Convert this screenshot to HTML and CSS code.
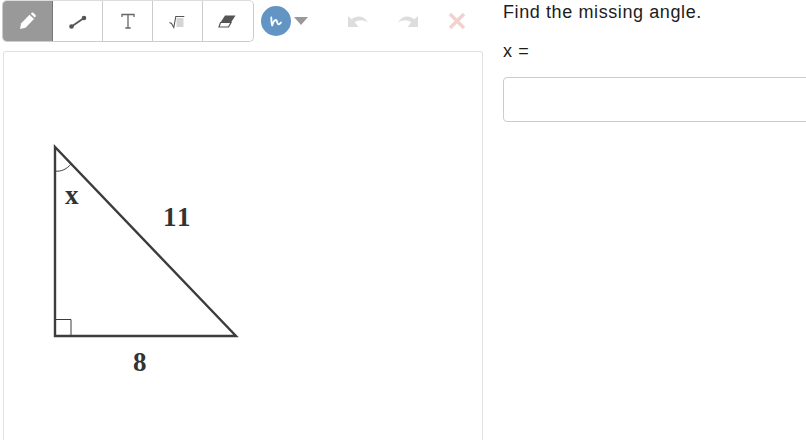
FILE: index.html
```html
<!DOCTYPE html>
<html lang="en">
<head>
<meta charset="utf-8">
<title>Find the missing angle</title>
<link rel="stylesheet" href="styles.css">
</head>
<body>
<div class="page">
  <div class="work">
    <div class="toolbar">
      <div class="tools">
        <div class="tool active">
          <svg width="20" height="20" viewBox="0 0 20 20"><path d="M2 18l1-5.500 8.500-8.700 4.500 4.200-8.500 8.800z" fill="#fff"/><path d="M12.800 2.800l1-1c.5-.4 1-.4 1.500 0l2.300 2.200c.4.500.4 1 0 1.400l-1 1z" fill="#fff"/></svg>
        </div>
        <div class="tool">
          <svg width="20" height="20" viewBox="0 0 20 20"><path d="M3.500 15.500L16 7" stroke="#555" stroke-width="1.800"/><circle cx="3.500" cy="15.500" r="2.300" fill="#555"/><circle cx="16" cy="7" r="2.300" fill="#555"/></svg>
        </div>
        <div class="tool">
          <svg width="20" height="20" viewBox="0 0 20 20"><path d="M4 6V3.500h12V6M10 3.500V17M7.300 17h5.400" fill="none" stroke="#666" stroke-width="1.300"/></svg>
        </div>
        <div class="tool">
          <svg width="20" height="20" viewBox="0 0 20 20"><path d="M1.500 11.500l2 1 2.300 4 2-11h8.500" fill="none" stroke="#555" stroke-width="1.100"/><rect x="8.500" y="7" width="7" height="9" fill="#d5d5d5"/></svg>
        </div>
        <div class="tool">
          <svg width="20" height="20" viewBox="0 0 20 20"><path d="M7 4.500H17.500L13 11.500H2.500z" fill="#555"/><path d="M2.500 11.500H13L10.500 16H1z" fill="#fff" stroke="#555" stroke-width="1.200"/></svg>
        </div>
      </div>
      <div class="picker">
        <div class="swatch">
          <svg width="16" height="16" viewBox="0 0 16 16"><path d="M3.300 4.500C3.200 7 3.500 10 4.200 12.500 4.800 10 6.300 7 8 7c1.500 0 .6 4 2.300 4.300 1.200 0 2-.8 2.700-1.800" fill="none" stroke="#fff" stroke-width="1.800" stroke-linecap="round" stroke-linejoin="round"/></svg>
        </div>
        <div class="caret"></div>
      </div>
      <div class="actions">
        <svg width="22" height="16" viewBox="0 0 22 16"><path d="M1 14V3l3.700 3.300C9.500 2.500 16.500 2 21 9.500 16 6.500 11.500 6.500 7.800 9.200L11.500 14z" fill="#ddd"/></svg>
        <svg width="22" height="16" viewBox="0 0 22 16"><path d="M21 14V3l-3.700 3.300C12.500 2.500 5.500 2 1 9.500 6 6.500 10.500 6.500 14.200 9.200L10.500 14z" fill="#ddd"/></svg>
        <svg width="20" height="20" viewBox="0 0 20 20"><path d="M3 3l14 14M17 3L3 17" stroke="#f1d2cf" stroke-width="3.400"/></svg>
      </div>
    </div>
    <div class="canvas">
      <svg class="figure" width="478" height="388" viewBox="4 52 478 388">
        <g fill="none" stroke="#3c3c3c">
          <path d="M55 147V336H236Z" stroke-width="2.400" stroke-linejoin="miter"/>
          <path d="M55 319.500H71V336" stroke-width="1"/>
          <path d="M55 171C61 172 67 169 71 164" stroke-width="1"/>
        </g>
        <g class="labels">
          <text x="65" y="204">x</text>
          <text x="163" y="226" class="wide">11</text>
          <text x="133" y="371">8</text>
        </g>
      </svg>
    </div>
  </div>
  <div class="question">
    <p class="prompt">Find the missing angle.</p>
    <p class="eq">x =</p>
    <div class="answer"></div>
  </div>
</div>
</body>
</html>
```
FILE: styles.css
```css
html, body {
  margin: 0;
  padding: 0;
  background: #fff;
  height: 100%;
  overflow: hidden;
}
.page {
  display: flex;
  width: 806px;
  height: 440px;
  overflow: hidden;
  font-family: "Liberation Sans", Arial, sans-serif;
  color: #1c1c1c;
}
.work {
  flex: 0 0 483px;
  padding-left: 2px;
  box-sizing: border-box;
  display: flex;
  flex-direction: column;
}
.toolbar {
  display: flex;
  align-items: center;
  height: 42px;
  margin-bottom: 9px;
}
.tools {
  display: flex;
  width: 252px;
  height: 42px;
  box-sizing: border-box;
  border: 1px solid #ccc;
  border-top-color: #ddd;
  border-radius: 5px;
  overflow: hidden;
}
.tool {
  flex: 0 0 50px;
  box-sizing: border-box;
  display: flex;
  align-items: center;
  justify-content: center;
  border-right: 1px solid #ccc;
}
.tool:last-child {
  border-right: 0;
}
.tool.active {
  background: #999;
  border-right-color: #777;
}
.picker {
  display: flex;
  align-items: center;
  margin-left: 7px;
  gap: 3px;
}
.swatch {
  width: 30px;
  height: 30px;
  border-radius: 50%;
  background: #6295c4;
  display: flex;
  align-items: center;
  justify-content: center;
}
.caret {
  width: 0;
  height: 0;
  border-left: 7px solid transparent;
  border-right: 7px solid transparent;
  border-top: 8px solid #999;
  margin-top: -1px;
}
.actions {
  display: flex;
  align-items: center;
  gap: 28px;
  margin-left: 39px;
}
.canvas {
  flex: 1;
  margin-left: 1px;
  border: 1px solid #e2e2e2;
  border-bottom: 0;
  border-radius: 3px 3px 0 0;
  overflow: hidden;
}
.figure {
  display: block;
}
.labels text {
  font-family: "Liberation Serif", "Times New Roman", serif;
  font-weight: bold;
  font-size: 27px;
  fill: #333;
}
.labels .wide {
  letter-spacing: 2px;
}
.question {
  flex: 1;
  padding-left: 20px;
  min-width: 0;
}
.prompt {
  margin: 0;
  font-size: 18px;
  letter-spacing: 0.6px;
  line-height: 25px;
  height: 25px;
}
.eq {
  margin: 14px 0 0;
  font-size: 18px;
  letter-spacing: 0.6px;
  line-height: 24px;
  height: 24px;
}
.answer {
  margin-top: 14px;
  width: 340px;
  height: 45px;
  box-sizing: border-box;
  border: 1px solid #ccc;
  border-radius: 4px;
}
```
